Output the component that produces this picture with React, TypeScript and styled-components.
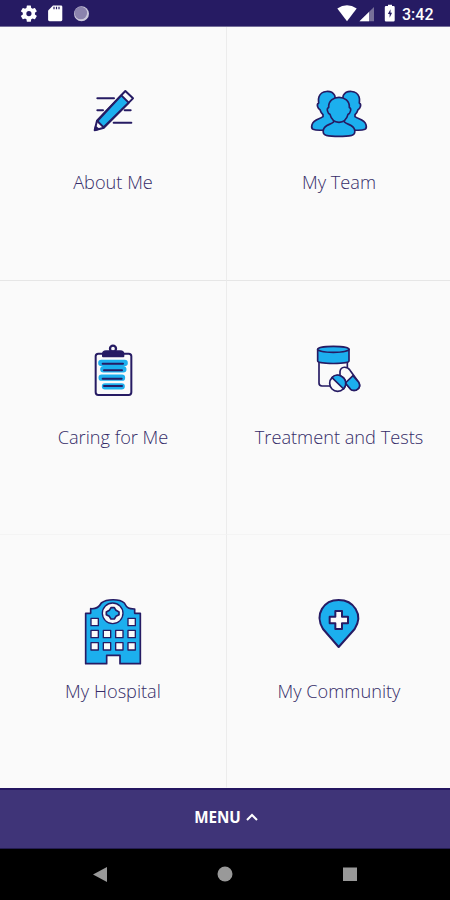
import React from "react";
import styled, { createGlobalStyle } from "styled-components";

const NAVY = "#261b63";
const BLUE = "#1cafee";

const GlobalStyle = createGlobalStyle`
  body { margin: 0; background: #fafafa; }
  svg { display: block; }
`;

const Screen = styled.main`
  display: flex;
  flex-direction: column;
  width: 450px;
  height: 900px;
  overflow: hidden;
  background: #fafafa;
  font-family: "Open Sans", "Noto Sans", sans-serif;
`;

const StatusBar = styled.header`
  display: flex;
  justify-content: space-between;
  flex: none;
  height: 27px;
  box-sizing: border-box;
  border-bottom: 1px solid #746e99;
  background: #261b63;
  color: #fff;
`;

const StatusGroup = styled.div`
  display: flex;
  height: 26px;
`;

const Clock = styled.span`
  width: 48px;
  font: 500 16px/29px Roboto, sans-serif;
`;

const Tiles = styled.section`
  display: grid;
  grid-template-columns: 227px 223px;
  grid-template-rows: 254px 254px 253px;
  flex: none;
`;

const Tile = styled.div<{ $left: boolean; $line: string }>`
  display: flex;
  flex-direction: column;
  align-items: center;
  box-sizing: border-box;
  padding-top: 50px;
  padding-left: ${(p) => (p.$left ? 0 : 1)}px;
  border-right: ${(p) => (p.$left ? "1px solid #ececec" : "none")};
  border-bottom: 1px solid ${(p) => p.$line};
`;

const Label = styled.span<{ $gap: number }>`
  margin-top: ${(p) => p.$gap}px;
  color: #352c68;
  font-size: 18.2px;
  font-weight: 300;
  line-height: 26px;
  white-space: nowrap;
`;

const MenuBar = styled.div`
  display: flex;
  align-items: center;
  justify-content: center;
  gap: 5px;
  flex: none;
  height: 61px;
  padding: 0 0 4px 2px;
  box-sizing: border-box;
  border-top: 2px solid #241661;
  border-bottom: 1px solid #241c50;
  background: #3f3478;
  color: #fff;
  font-size: 15.2px;
  font-weight: 700;
`;

const NavBar = styled.nav`
  flex: 1;
  background: #000;
`;

const Art = ({ x, y, children }: { x: number; y: number; children: React.ReactNode }) => (
  <svg width="90" height="80" viewBox="0 0 270 240" fill="none" stroke={NAVY} strokeWidth="6" strokeLinejoin="round" strokeLinecap="round">
    <g transform={`translate(${x} ${y})`}>{children}</g>
  </svg>
);

const PencilArt = () => (
  <Art x={36} y={9}>
    <path d="M52 55h50M52 91h17M134 91h18M101 128h53" />
    <path d="M44 151l7-29L136 33l23 22-87 88z" fill="#fafafa" />
    <path d="M52 123l72-77 22 22-75 74z" fill={BLUE} />
    <path d="M45 150l2-9 8 6z" fill={NAVY} />
  </Art>
);

const TeamArt = () => (
  <Art x={18} y={9}>
    <g fill={BLUE} strokeWidth="5">
      <path d="M104 46C94 29 64 31 57 50c-3 8-1 13-1 19-8 4-2 17 4 20 2 7 5 11 9 15v6c-11 8-28 8-33 24-2 7-1 12 3 14 9 4 26 3 39 2l40-40z" />
      <path d="M130 46c10-17 40-15 47 4 3 8 1 13 1 19 8 4 2 17-4 20-2 7-5 11-9 15v6c11 8 28 8 33 24 2 7 1 12-3 14-9 4-26 3-39 2l-40-40z" />
      <path d="M101 118v8c-10 9-28 8-31 24-2 10 1 14 9 16 18 4 57 4 76 0 8-2 11-6 9-16-3-16-21-15-31-24v-8z" />
      <path d="M86 83c-3-41 65-41 62 0 8 1 3 18-4 20-3 12-11 23-27 24-16-1-24-12-27-24-7-2-12-19-4-20z" />
    </g>
  </Art>
);

const ClipboardArt = () => (
  <Art x={36} y={12}>
    <rect x="47" y="56" width="107" height="124" rx="8" fill="#fafafa" />
    <path d="M69 64v-7q0-8 9-8h43q9 0 9 8v7z" fill={NAVY} />
    <circle cx="99" cy="41" r="9" strokeWidth="7" />
    <path d="M64 84h70M70 103h60M65 128h61M75 154h50" stroke={BLUE} strokeWidth="19" />
    <path d="M68 86h61M72 106h54M68 131h57M72 153h54" strokeWidth="6" />
  </Art>
);

const MedicineArt = () => (
  <Art x={33} y={12}>
    <g strokeWidth="5">
      <path d="M42 80v64q0 9 9 9h24M127 80v20" />
      <path d="M38 43v35c0 10 94 10 94 0V43z" fill={BLUE} />
      <ellipse cx="85" cy="43" rx="47" ry="9" fill={BLUE} />
      <path d="M105 125v-15c2-17 22-17 31-3l25 35c10 17-10 30-24 21z" fill="#fafafa" />
      <path d="M121 144l23-22 17 20c10 17-10 30-24 21z" fill={BLUE} />
      <circle cx="98" cy="145" r="24" fill="#fafafa" />
      <path d="M81 128l35 34c12-16 6-31-7-38-10-6-21-4-28 4z" fill={BLUE} />
    </g>
  </Art>
);

const HospitalArt = () => (
  <Art x={21} y={15}>
    <path d="M32 221V70h15V56q22 2 32-17c16-13 55-13 69 0 8 17 16 17 31 18v13h17v151h-61v-25H95v25z" fill={BLUE} strokeWidth="5" />
    <circle cx="113" cy="70" r="31" fill="#fafafa" strokeWidth="4" />
    <path d="M108 53h10l5 8 9 5v8l-9 5-5 8h-10l-5-8-9-5v-8l9-5z" fill={BLUE} strokeWidth="5" />
    <g fill="#fafafa" strokeWidth="4">
      {[[48, 85], [159, 85], [48, 121], [85, 121], [122, 121], [159, 121], [48, 158], [85, 158], [122, 158], [159, 158]].map(([x, y]) => (
        <rect key={`${x}-${y}`} x={x} y={y} width="22" height="22" />
      ))}
    </g>
  </Art>
);

const LocationArt = () => (
  <Art x={33} y={15}>
    <path d="M101 171L54 117C27 72 57 30 101 30s76 43 48 87z" fill={BLUE} />
    <path d="M91 63h20v17h18v20h-18v17H91v-17H74V80h17z" fill="#fafafa" />
  </Art>
);

const tiles = [
  { label: "About Me", Icon: PencilArt },
  { label: "My Team", Icon: TeamArt },
  { label: "Caring for Me", Icon: ClipboardArt },
  { label: "Treatment and Tests", Icon: MedicineArt },
  { label: "My Hospital", Icon: HospitalArt },
  { label: "My Community", Icon: LocationArt },
];
const rowLines = ["#e6e6e6", "#f4f4f4", "#fafafa"];

export default function App() {
  return (
    <Screen>
      <GlobalStyle />
      <StatusBar>
        <StatusGroup>
          <svg width="100" height="26">
            <g transform="translate(19.2 3.9) scale(.81)">
              <path fill="#fff" fillRule="evenodd" d="M19.4 13a7.5 7.5 0 0 0 0-2l2.1-1.6a.5.5 0 0 0 .1-.7l-2-3.4a.5.5 0 0 0-.6-.2l-2.5 1a7.3 7.3 0 0 0-1.7-1L14.4 2.4a.5.5 0 0 0-.5-.4h-4a.5.5 0 0 0-.5.4L9 5.1a7.3 7.3 0 0 0-1.7 1l-2.5-1a.5.5 0 0 0-.6.2l-2 3.4a.5.5 0 0 0 .1.7L4.5 11a7.5 7.5 0 0 0 0 2l-2.2 1.6a.5.5 0 0 0-.1.7l2 3.4c.1.2.4.3.6.2l2.5-1a7.3 7.3 0 0 0 1.7 1l.4 2.7c0 .2.2.4.5.4h4c.3 0 .5-.2.5-.4l.4-2.7a7.3 7.3 0 0 0 1.7-1l2.5 1c.2.1.5 0 .6-.2l2-3.4a.5.5 0 0 0-.1-.7zM12 15.200a3.200 3.200 0 1 1 0-6.400 3.200 3.200 0 0 1 0 6.400z" />
            </g>
            <path d="M53 5.500h8q1.300 0 1.300 1.300v13q0 1.400-1.300 1.400H49.500q-1.400 0-1.400-1.400V10.500z" fill="#fff" />
            <path d="M54 6.800v2.400M56.500 6.800v2.400M59 6.800v2.400" stroke={NAVY} strokeWidth="1.200" />
            <circle cx="81.500" cy="13.700" r="7.500" fill="#cbc8db" />
            <circle cx="80.800" cy="13" r="6.300" fill="#8b83ad" />
          </svg>
        </StatusGroup>
        <StatusGroup>
          <svg width="66" height="26">
            <path d="M1.300 8.500Q11 2 20.700 8.500L11 21.300z" fill="#fff" />
            <path d="M23.500 21.300L38 7v14.300z" fill="#777099" />
            <path d="M23.500 21.300L33 12v9.300z" fill="#fff" />
            <path d="M50 6h2V4.700h4V6h1.500q1.200 0 1.200 1.200v13q0 1.200-1.200 1.200H50q-1.200 0-1.200-1.200v-13Q48.800 6 50 6z" fill="#fff" />
            <path d="M54.500 9.300l-2.600 4.700h1.700v3.700l2.500-4.900h-1.600z" fill={NAVY} />
          </svg>
          <Clock>3:42</Clock>
        </StatusGroup>
      </StatusBar>
      <Tiles>
        {tiles.map(({ label, Icon }, i) => (
          <Tile key={label} $left={i % 2 === 0} $line={rowLines[Math.floor(i / 2)]}>
            <Icon />
            <Label $gap={i < 2 ? 12 : 13}>{label}</Label>
          </Tile>
        ))}
      </Tiles>
      <MenuBar>
        <span>MENU</span>
        <svg width="12" height="8" fill="none" stroke="#fff" strokeWidth="2">
          <path d="M1 7l5-5 5 5" />
        </svg>
      </MenuBar>
      <NavBar>
        <svg width="450" height="51" fill="#999">
          <path d="M93 25.500l14-7.500v15z" />
          <circle cx="225" cy="25" r="7.500" />
          <rect x="343" y="18.500" width="14" height="13.500" />
        </svg>
      </NavBar>
    </Screen>
  );
}
